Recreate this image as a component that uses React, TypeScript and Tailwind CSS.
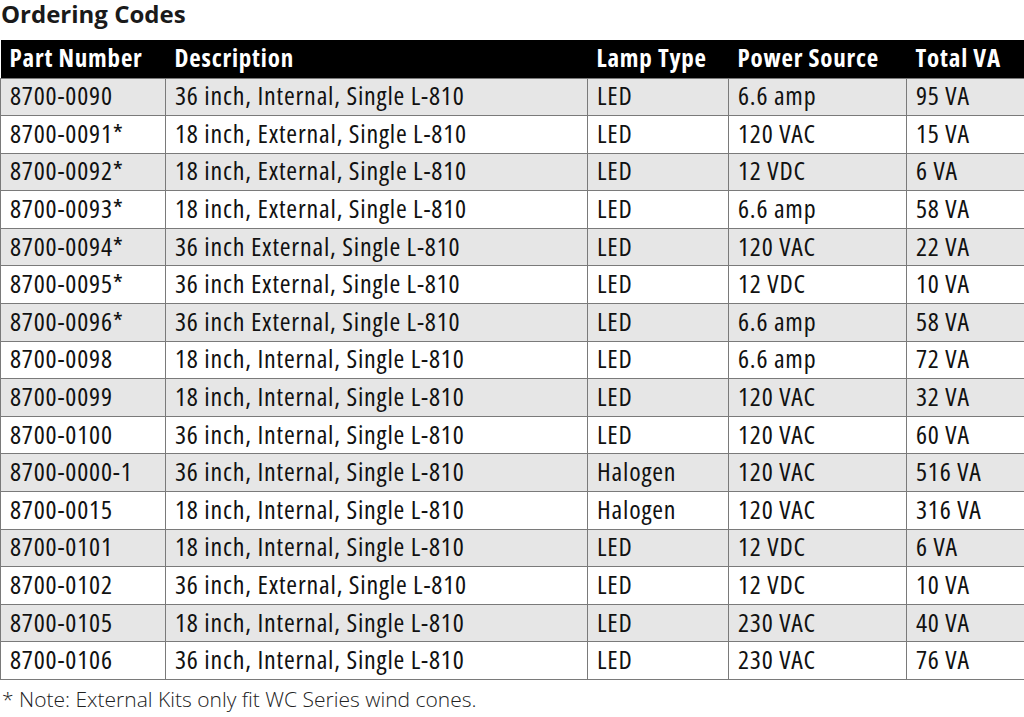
const rows: [string, string, string, string, string][] = [
  ["8700-0090", "36 inch, Internal, Single L-810", "LED", "6.6 amp", "95 VA"],
  ["8700-0091*", "18 inch, External, Single L-810", "LED", "120 VAC", "15 VA"],
  ["8700-0092*", "18 inch, External, Single L-810", "LED", "12 VDC", "6 VA"],
  ["8700-0093*", "18 inch, External, Single L-810", "LED", "6.6 amp", "58 VA"],
  ["8700-0094*", "36 inch External, Single L-810", "LED", "120 VAC", "22 VA"],
  ["8700-0095*", "36 inch External, Single L-810", "LED", "12 VDC", "10 VA"],
  ["8700-0096*", "36 inch External, Single L-810", "LED", "6.6 amp", "58 VA"],
  ["8700-0098", "18 inch, Internal, Single L-810", "LED", "6.6 amp", "72 VA"],
  ["8700-0099", "18 inch, Internal, Single L-810", "LED", "120 VAC", "32 VA"],
  ["8700-0100", "36 inch, Internal, Single L-810", "LED", "120 VAC", "60 VA"],
  ["8700-0000-1", "36 inch, Internal, Single L-810", "Halogen", "120 VAC", "516 VA"],
  ["8700-0015", "18 inch, Internal, Single L-810", "Halogen", "120 VAC", "316 VA"],
  ["8700-0101", "18 inch, Internal, Single L-810", "LED", "12 VDC", "6 VA"],
  ["8700-0102", "36 inch, External, Single L-810", "LED", "12 VDC", "10 VA"],
  ["8700-0105", "18 inch, Internal, Single L-810", "LED", "230 VAC", "40 VA"],
  ["8700-0106", "36 inch, Internal, Single L-810", "LED", "230 VAC", "76 VA"],
];

const headers = ["Part Number", "Description", "Lamp Type", "Power Source", "Total VA"];
const widths = ["w-[165px]", "w-[422px]", "w-[141px]", "w-[178px]", "w-[118px]"];

export default function App() {
  return (
    <div className="w-[1024px] h-[717px] bg-white overflow-hidden font-['Open_Sans',sans-serif] text-[#111]">
      <h2 className="pl-[1px] h-[40px] pt-[1px] text-[24px] leading-[26px] font-bold text-[#1a1a1a]">
        Ordering Codes
      </h2>
      <table className="border-collapse table-fixed w-[1025px] text-[26px] font-stretch-condensed tracking-[0.8px]">
        <colgroup>
          {widths.map((w, i) => (
            <col key={i} className={w} />
          ))}
        </colgroup>
        <thead>
          <tr className="bg-black h-[38px]">
            {headers.map((h) => (
              <th key={h} className="text-left font-bold text-[25px] text-white pl-[9px] pt-0 pb-[2px] leading-none">
                {h}
              </th>
            ))}
          </tr>
        </thead>
        <tbody>
          {rows.map((r, i) => (
            <tr key={r[0]} className={`h-[37.6px] ${i % 2 === 0 ? "bg-[#e6e6e6]" : "bg-white"}`}>
              {r.map((c, j) => (
                <td key={j} className="border border-[#7a7a7a] pl-[9px] pt-0 pb-[3px] leading-none whitespace-nowrap">
                  {c}
                </td>
              ))}
            </tr>
          ))}
        </tbody>
      </table>
      <p className="pl-[2px] mt-[5px] text-[21px] leading-[28px] font-light text-[#222]">
        * Note: External Kits only fit WC Series wind cones.
      </p>
    </div>
  );
}
